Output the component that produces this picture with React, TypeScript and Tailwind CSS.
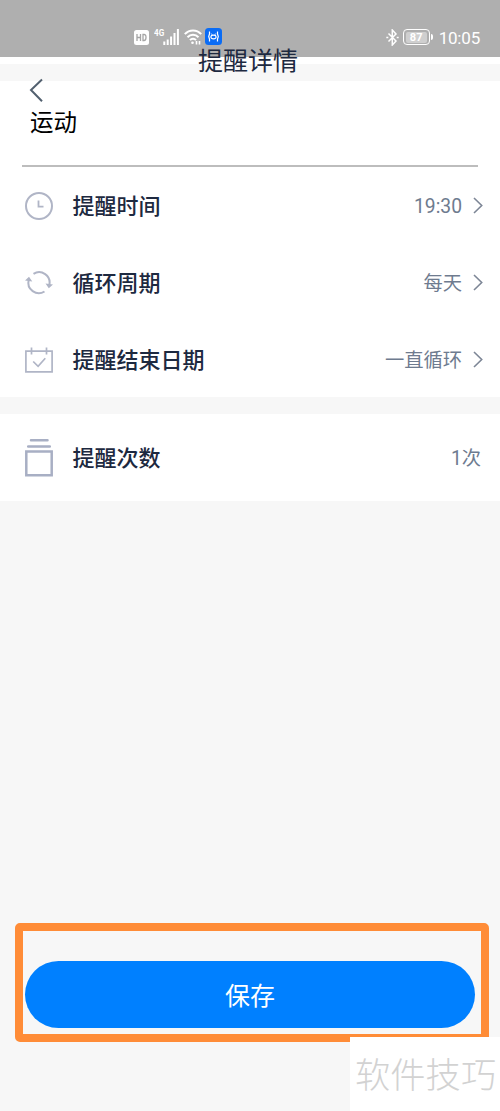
import type { ReactNode } from 'react';

const ICON_COLOR = '#b0b5c6';

function StatusBar() {
  return (
    <div className="flex h-[57px] items-start bg-[#afafaf] pl-[134px] pr-[20px] pt-[27px] text-white">
      <svg className="mt-[3px] shrink-0" width="15" height="15" viewBox="0 0 15 15">
        <rect width="15" height="15" rx="2.5" fill="#fff" />
        <path d="M3 4v7M6.5 4v7M3 7.5h3.5M9 4.5v6h1c1.4 0 2-1 2-3s-.6-3-2-3z" fill="none" stroke="#a5a5a5" strokeWidth="1.3" />
      </svg>
      <span className="ml-[5px] mt-px w-[9px] origin-left scale-x-90 font-[Roboto] text-[9px] font-bold leading-[10px]">4G</span>
      <svg className="mt-[2px] shrink-0" width="17" height="16" viewBox="0 0 17 16">
        <path d="M1.3 12.5V16M4.7 10.5V16M8.1 7.5V16M11.5 4V16M14.9 0V16" stroke="#fff" strokeWidth="2" />
      </svg>
      <svg className="ml-[4px] mt-[2px] shrink-0" width="18" height="16" viewBox="0 0 18 16" fill="none" stroke="#fff" strokeWidth="2">
        <path d="M.8 5.2C5.3.2 12.7.2 17.2 5.2M3.5 8.2C6.6 4.9 11.4 4.9 14.5 8.2M6 11.2C7.7 9.3 10.3 9.3 12 11.2" />
        <circle cx="8.5" cy="13.8" r="1.3" fill="#fff" stroke="none" />
        <path d="M12.5 12v3.500M15.500 12v3.500" strokeWidth="1.600" />
      </svg>
      <svg className="ml-[3px] mt-px shrink-0" width="17" height="17" viewBox="0 0 17 17" fill="none" stroke="#fff">
        <rect width="17" height="17" rx="3.5" fill="#0a6cf5" stroke="none" />
        <path d="M4.500 3.500v2.500l-.8 2.500.8 2.500v2.500M12.500 3.500v2.500l.8 2.500-.8 2.500v2.500" strokeWidth="1.200" />
        <path d="M6.300 5.500l1 1.500M10.700 5.500l-1 1.500" strokeWidth=".8" />
        <ellipse cx="8.500" cy="9" rx="2.600" ry="1.900" strokeWidth="1.100" />
      </svg>
      <svg className="ml-auto mt-[2px] shrink-0" width="13" height="17" viewBox="0 0 13 17" fill="none" stroke="#fff" strokeWidth="1.5">
        <path d="M2.500 4.500l7.500 7.500-3.700 4V1l3.700 4-7.500 7.500" />
        <path d="M.3 8.500h2M10.700 8.500h2" />
      </svg>
      <div className="ml-[4px] mt-[2px] flex h-[16px] w-[27px] items-center justify-center rounded-[4px] border-[1.5px] border-white">
        <span className="h-[11px] w-[21px] rounded-[2px] bg-[#cfcfcf] text-center font-[Roboto] text-[11px] font-bold leading-[11px]">87</span>
      </div>
      <div className="ml-px mt-[7px] h-[6px] w-[2px] rounded-r bg-white" />
      <span className="ml-[6px] font-[Roboto] text-[17px] leading-[22px] tracking-[-0.2px]">10:05</span>
    </div>
  );
}

function ClockIcon() {
  return (
    <svg width="28" height="28" viewBox="0 0 28 28" fill="none" stroke={ICON_COLOR}>
      <circle cx="14" cy="14" r="13" strokeWidth="2" />
      <path d="M13.5 8.5v6.2h5" strokeWidth="1.8" />
    </svg>
  );
}

function CycleIcon() {
  return (
    <svg width="28" height="28" viewBox="0 0 28 28" fill="none" stroke={ICON_COLOR} strokeWidth="2">
      <path d="M8.500 4.800A10.500 10.500 0 0 1 24.300 16" />
      <path d="M19.500 22.500A10.500 10.500 0 0 1 3.700 11" />
      <path d="M20.500 14.500l7.500 1-4.200 3.700zM0 11.500l7.300 1L4 7.800z" fill={ICON_COLOR} stroke="none" />
    </svg>
  );
}

function CalendarIcon() {
  return (
    <svg width="28" height="26" viewBox="0 0 28 26" fill="none" stroke={ICON_COLOR} strokeWidth="1.7">
      <path d="M.9 4.200h26.200v20.600H.9z" />
      <path d="M6.500.5v7M21.500.5v7" />
      <path d="M8.200 14.500l4.900 4.800 7.200-8" />
    </svg>
  );
}

function StackIcon() {
  return (
    <svg width="28" height="38" viewBox="0 0 28 38" fill="none" stroke="#a8afc4" strokeWidth="2.5">
      <path d="M6 1.300h16.500M3.200 7.500h21.600" strokeLinecap="round" />
      <path d="M1.300 12.500h25.400v23.700H1.300z" />
    </svg>
  );
}

interface RowProps {
  icon: ReactNode;
  label: string;
  value: string;
  arrow?: boolean;
}

function Row({ icon, label, value, arrow = true }: RowProps) {
  return (
    <div className="flex h-[77px] items-center pl-[25px] pr-[17px]">
      {icon}
      <span className="ml-[19.5px] pt-px text-[22px] font-medium text-[#1d2940]">{label}</span>
      <span className={`ml-auto pt-[4px] text-[19.3px] text-[#6e7b8f] ${arrow ? '' : 'mr-[2px]'}`}>{value}</span>
      {arrow && (
        <svg className="ml-[11px]" width="10" height="17" viewBox="0 0 10 17" fill="none" stroke="#7d8696" strokeWidth="1.6">
          <path d="M1 1l7.700 7.500L1 16" />
        </svg>
      )}
    </div>
  );
}

export default function App() {
  return (
    <div className="relative flex h-[1111px] w-[500px] flex-col overflow-hidden bg-[#f7f7f7] font-[Roboto,'Noto_Sans_CJK_SC',sans-serif]">
      <StatusBar />
      <div className="h-[7px] bg-white" />
      <h1 className="absolute left-0 top-[44px] w-full pr-[4px] text-center text-[25px] leading-[36px] text-[#1d2940]">提醒详情</h1>

      {/* Reminder name and schedule */}
      <section className="mt-[17px] h-[316px] bg-white">
        <div className="h-[24px] pl-[29px]">
          <svg className="overflow-visible" width="14" height="24" viewBox="0 0 14 24" fill="none" stroke="#52606f" strokeWidth="2">
            <path d="M13-1.500L2 9l11 11.300" />
          </svg>
        </div>
        <div className="mx-[22px] h-[62px] border-b-2 border-[#bdbdbd] pl-[8px] text-[23.5px] leading-[36px] text-black">
          运动
        </div>
        <Row icon={<ClockIcon />} label="提醒时间" value="19:30" />
        <Row icon={<CycleIcon />} label="循环周期" value="每天" />
        <Row icon={<CalendarIcon />} label="提醒结束日期" value="一直循环" />
      </section>

      <section className="mt-[17px] flex h-[87px] flex-col justify-center bg-white">
        <Row icon={<StackIcon />} label="提醒次数" value="1次" arrow={false} />
      </section>

      {/* Highlighted save action */}
      <div className="mb-[69px] ml-[15px] mr-[11px] mt-auto h-[119px] rounded-[5px] border-8 border-[#ff8c37] px-[2px] pt-[30px]">
        <button className="h-[67px] w-[450px] rounded-full bg-[#0080ff] pt-[4px] text-[25px] text-white">保存</button>
      </div>

      <div className="absolute bottom-0 right-0 h-[74px] w-[150px] bg-white pl-[5px] text-[35.3px] font-light leading-[78px] text-[#d2d2d2]">
        软件技巧
      </div>
    </div>
  );
}
